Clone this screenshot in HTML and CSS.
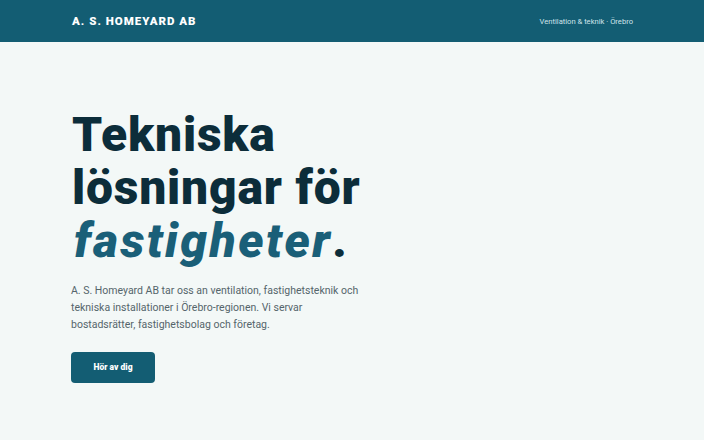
FILE: index.html
```html
<!DOCTYPE html>
<html lang="sv">
<head>
    <meta charset="UTF-8">
    <meta name="viewport" content="width=device-width, initial-scale=1.0">
    <title>A. S. Homeyard AB</title>
    <link rel="stylesheet" href="styles.css">
</head>
<body>

    <div class="navbar">
        <div class="wrap navbar-inner">
            <span class="brand">A. S. HOMEYARD AB</span>
            <span class="tagline">Ventilation &amp; teknik · Örebro</span>
        </div>
    </div>

    <div class="wrap hero">
        <h1>Tekniska<br>lösningar för<br><em>fastigheter</em>.</h1>
        <p class="lead">A. S. Homeyard AB tar oss an ventilation, fastighetsteknik och tekniska installationer i Örebro-regionen. Vi servar bostadsrätter, fastighetsbolag och företag.</p>
        <a href="#kontakt" class="btn">Hör av dig</a>
    </div>

</body>
</html>
```

FILE: styles.css
```css
body {
    font-family: Roboto, "Noto Sans", sans-serif;
    margin: 0;
    background-color: #f3f8f7;
    color: #0c2d3a;
}
.wrap {
    max-width: 562px;
    margin: 0 auto;
    padding: 0 71px;
}
.navbar {
    background-color: #135d73;
    color: white;
}
.navbar-inner {
    display: flex;
    justify-content: space-between;
    align-items: center;
    height: 42px;
}
.brand {
    font-weight: 900;
    font-size: 11.5px;
    letter-spacing: 1px;
    padding-left: 1px;
}
.tagline {
    font-size: 7.6px;
    color: #cfe3ea;
}
.hero {
    padding-top: 66px;
}
h1 {
    margin: 0;
    padding-left: 1px;
    font-size: 48px;
    line-height: 53px;
    font-weight: 900;
    letter-spacing: 0.8px;
    color: #0c2d3a;
}
h1 em {
    color: #1a5f78;
    letter-spacing: 2.4px;
    padding-left: 2px;
}
.lead {
    max-width: 298px;
    margin: 15px 0 19px;
    font-size: 10.5px;
    line-height: 17px;
    color: #55656b;
}
.btn {
    display: inline-block;
    width: 84px;
    height: 31px;
    line-height: 31px;
    text-align: center;
    background-color: #135d73;
    color: white;
    border-radius: 4px;
    font-size: 8.5px;
    font-weight: 900;
    text-decoration: none;
}
```
